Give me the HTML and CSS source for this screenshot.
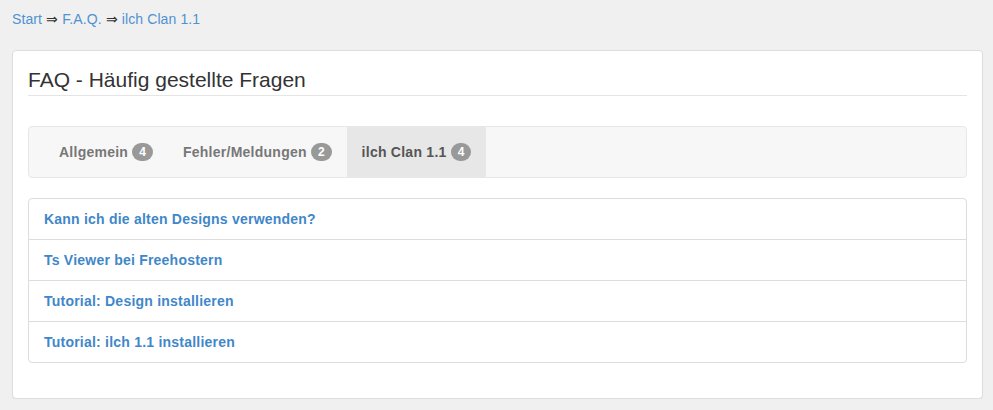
FILE: index.html
```html
<!DOCTYPE html>
<html lang="de">

<head>
	<meta charset="UTF-8">
	<meta name="viewport" content="width=device-width, initial-scale=1.0">
	<title>F.A.Q.</title>
	<link rel="stylesheet" href="styles.css">
</head>

<body>
	<div class="breadcrumb">
		<a href="#">Start</a> <span class="sep">&rArr;</span> <a href="#">F.A.Q.</a> <span class="sep">&rArr;</span> <a href="#">ilch Clan 1.1</a>
	</div>

	<div class="panel">
		<h1 class="page-title">FAQ - Häufig gestellte Fragen</h1>

		<div class="tabbar">
			<ul class="tabs">
				<li><a href="#">Allgemein <span class="badge">4</span></a></li>
				<li><a href="#">Fehler/Meldungen <span class="badge">2</span></a></li>
				<li class="active"><a href="#">ilch Clan 1.1 <span class="badge">4</span></a></li>
			</ul>
		</div>

		<div class="question-list">
			<a class="question" href="#">Kann ich die alten Designs verwenden?</a>
			<a class="question" href="#">Ts Viewer bei Freehostern</a>
			<a class="question" href="#">Tutorial: Design installieren</a>
			<a class="question" href="#">Tutorial: ilch 1.1 installieren</a>
		</div>
	</div>
</body>

</html>
```

FILE: styles.css
```css
* {
	box-sizing: border-box;
}

body {
	margin: 0;
	padding: 9px 10px 0 12px;
	background: #f0f0f0;
	color: #333;
	font-family: "Liberation Sans", Arial, Helvetica, sans-serif;
	font-size: 14px;
	line-height: 20px;
}

a {
	color: #428bca;
	text-decoration: none;
}

.breadcrumb {
	margin-bottom: 21px;
	letter-spacing: 0.1px;
}

.breadcrumb a {
	color: #4f92d0;
}

.sep {
	color: #333;
}

.panel {
	background: #fff;
	border: 1px solid #ddd;
	border-radius: 4px;
	box-shadow: 0 1px 1px rgba(0, 0, 0, 0.05);
	padding: 0 15px 35px;
}

.page-title {
	margin: 17px 0 0;
	padding-bottom: 4px;
	border-bottom: 1px solid #e5e5e5;
	font-size: 21px;
	font-weight: normal;
	line-height: 1.1;
	color: #333;
}

.tabbar {
	margin-top: 30px;
	min-height: 52px;
	background: #f7f7f7;
	border: 1px solid #e7e7e7;
	border-radius: 4px;
	padding: 0 15px;
}

.tabs {
	display: flex;
	margin: 0;
	padding: 0;
	list-style: none;
}

.tabs a {
	display: block;
	padding: 15px;
	color: #777;
	font-weight: bold;
	letter-spacing: 0.25px;
}

.tabs .active a {
	background: #e7e7e7;
	color: #555;
}

.badge {
	display: inline-block;
	min-width: 10px;
	padding: 3px 7px;
	border-radius: 10px;
	background: #999;
	color: #fff;
	font-size: 12px;
	font-weight: bold;
	line-height: 1;
	letter-spacing: 0;
	text-align: center;
	vertical-align: middle;
	position: relative;
	top: -1px;
}

.question-list {
	margin-top: 20px;
	display: flex;
	flex-direction: column;
}

.question {
	display: block;
	padding: 10px 15px;
	margin-bottom: -1px;
	border: 1px solid #ddd;
	font-weight: bold;
	letter-spacing: 0.22px;
	color: #3f87c9;
}

.question:first-child {
	border-radius: 4px 4px 0 0;
}

.question:last-child {
	margin-bottom: 0;
	border-radius: 0 0 4px 4px;
}
```
